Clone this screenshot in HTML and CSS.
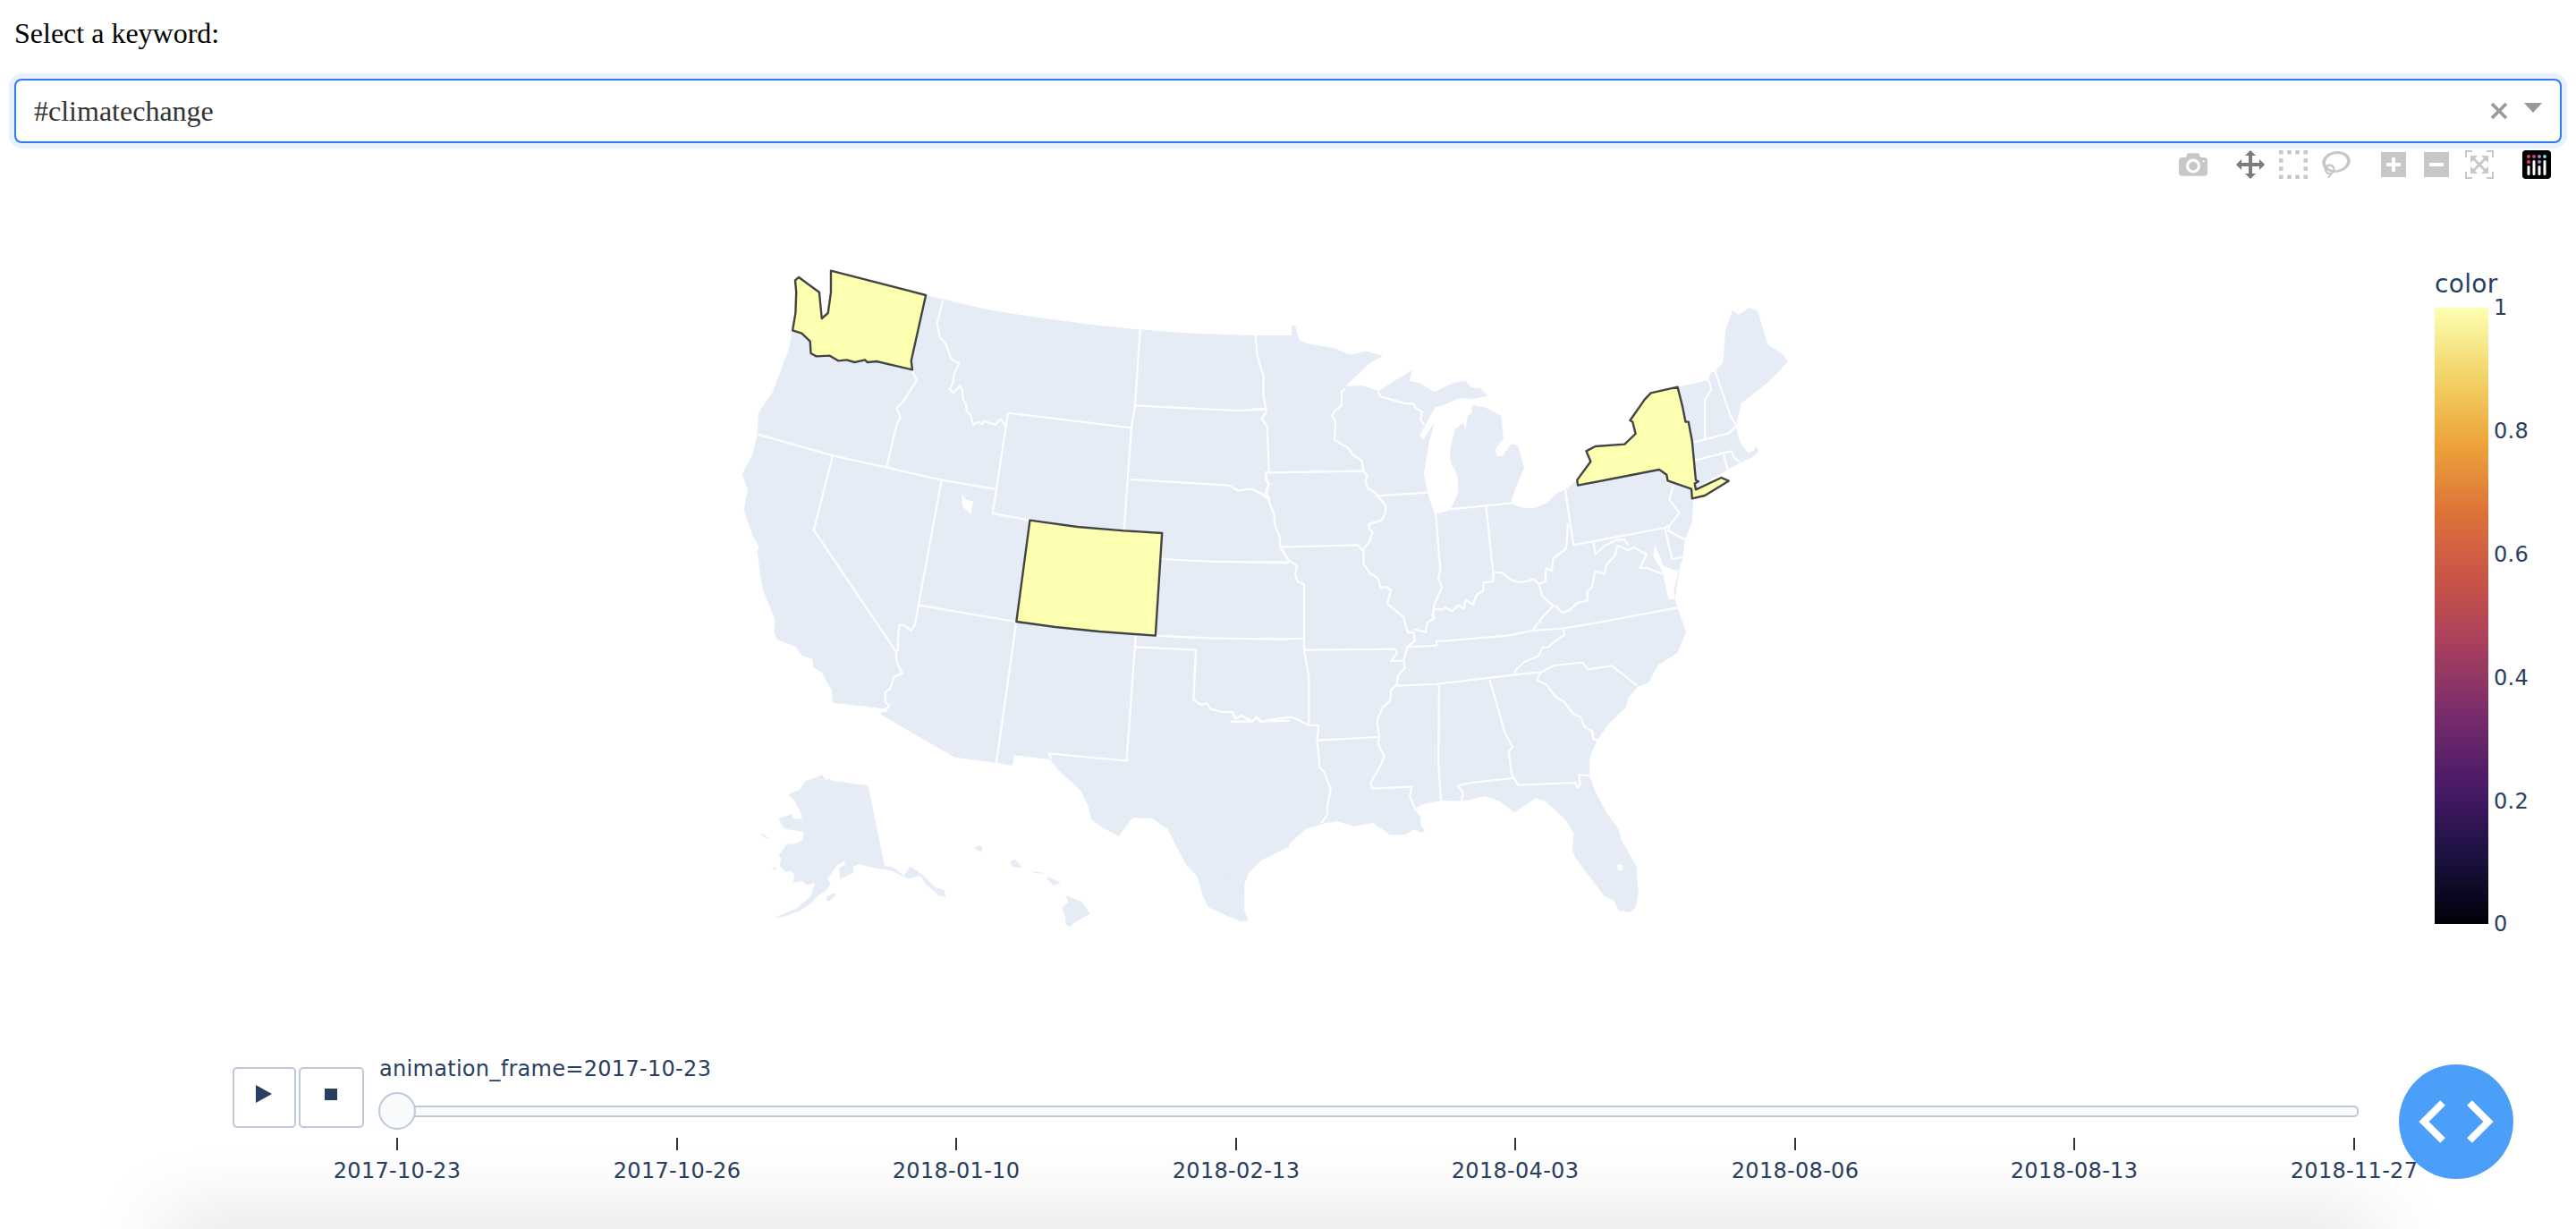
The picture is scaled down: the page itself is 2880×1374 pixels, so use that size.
FILE: index.html
```html
<!DOCTYPE html>
<html lang="en">
<head>
<meta charset="utf-8">
<title>Keyword map</title>
<link rel="stylesheet" href="styles.css">
</head>
<body>
<div class="page">
  <label class="field-label">Select a keyword:</label>
  <div class="select">
    <span class="select-value">#climatechange</span>
    <svg class="select-clear" viewBox="0 0 20 20"><path d="M2 2 18 18M18 2 2 18"/></svg>
    <svg class="select-arrow" viewBox="0 0 20 11"><path d="M0 0H20L10 11Z"/></svg>
  </div>
  <div class="modebar">
    <svg class="mb mb-w32 mb-gap32" viewBox="0 0 1000 1000"><path transform="matrix(1 0 0 -1 0 850)" d="m500 450c-83 0-150-67-150-150 0-83 67-150 150-150 83 0 150 67 150 150 0 83-67 150-150 150z m400 150h-120c-16 0-34 13-39 29l-31 93c-6 15-23 28-40 28h-340c-16 0-34-13-39-28l-31-94c-6-15-23-28-40-28h-120c-55 0-100-45-100-100v-450c0-55 45-100 100-100h800c55 0 100 45 100 100v450c0 55-45 100-100 100z m-400-550c-138 0-250 112-250 250 0 138 112 250 250 250 138 0 250-112 250-250 0-138-112-250-250-250z m365 380c-19 0-35 16-35 35 0 19 16 35 35 35 19 0 35-16 35-35 0-19-16-35-35-35z"/></svg>
    <svg class="mb mb-active mb-w32 mb-gap16" viewBox="0 0 1000 1000"><path transform="matrix(1 0 0 -1 0 850)" d="m1000 350l-187 188 0-125-250 0 0 250 125 0-188 187-187-187 125 0 0-250-250 0 0 125-188-188 186-187 0 125 252 0 0-250-125 0 187-188 188 188-125 0 0 250 250 0 0-126 187 188z"/></svg>
    <svg class="mb mb-w32 mb-gap16" viewBox="0 0 1000 1000"><path transform="matrix(1 0 0 -1 0 850)" d="m0 850l0-143 143 0 0 143-143 0z m286 0l0-143 143 0 0 143-143 0z m285 0l0-143 143 0 0 143-143 0z m286 0l0-143 143 0 0 143-143 0z m-857-286l0-143 143 0 0 143-143 0z m857 0l0-143 143 0 0 143-143 0z m-857-285l0-143 143 0 0 143-143 0z m857 0l0-143 143 0 0 143-143 0z m-857-286l0-143 143 0 0 143-143 0z m286 0l0-143 143 0 0 143-143 0z m285 0l0-143 143 0 0 143-143 0z m286 0l0-143 143 0 0 143-143 0z"/></svg>
    <svg class="mb mb-w32 mb-gap34" viewBox="0 0 1031 1000"><path transform="matrix(1 0 0 -1 0 850)" d="m1018 538c-36 207-290 336-568 286-277-48-473-256-436-463 10-57 36-108 76-151-13-66 11-137 68-183 34-28 75-41 114-42l-55-70 0 0c-2-1-3-2-4-3-10-14-8-34 5-45 14-11 34-8 45 4 1 1 2 3 2 5l0 0 113 140c16 11 31 24 45 40 4 3 6 7 8 11 48-3 100 0 151 9 278 48 473 255 436 462z m-624-379c-80 14-149 48-197 96 42 42 109 47 156 9 33-26 47-66 41-105z m-187-74c-19 16-33 37-39 60 50-32 109-55 174-68-42-25-95-24-135 8z m360 75c-34-7-69-9-102-8 8 62-16 128-68 170-73 59-175 54-244-5-9 20-16 40-20 61-28 159 121 317 333 354s407-60 434-217c28-159-121-318-333-355z"/></svg>
    <svg class="mb mb-w28 mb-gap20" viewBox="0 0 875 1000"><path transform="matrix(1 0 0 -1 0 850)" d="m1 787l0-875 875 0 0 875-875 0z m687-500l-187 0 0-187-125 0 0 187-188 0 0 125 188 0 0 187 125 0 0-187 187 0 0-125z"/></svg>
    <svg class="mb mb-w28 mb-gap18" viewBox="0 0 875 1000"><path transform="matrix(1 0 0 -1 0 850)" d="m0 788l0-876 875 0 0 876-875 0z m688-500l-500 0 0 125 500 0 0-125z"/></svg>
    <svg class="mb mb-w32 mb-gap32" viewBox="0 0 1000 1000"><path transform="matrix(1 0 0 -1 0 850)" d="m250 850l-187 0-63 0 0-62 0-188 63 0 0 188 187 0 0 62z m688 0l-188 0 0-62 188 0 0-188 62 0 0 188 0 62-62 0z m-875-938l0 188-63 0 0-188 0-62 63 0 187 0 0 62-187 0z m875 188l0-188-188 0 0-62 188 0 62 0 0 62 0 188-62 0z m-125 188l-1 0-93-94-156 156 156 156 92-93 2 0 0 250-250 0 0-2 93-92-156-156-156 156 94 92 0 2-250 0 0-250 0 0 93 93 157-156-157-156-93 94 0 0 0-250 250 0 0 0-94 93 156 157 156-157-93-93 0 0 250 0 0 250z"/></svg>
    <svg class="mb-logo" viewBox="0 0 32 32">
      <rect class="logo-bg" width="32" height="32" rx="4"/>
      <circle class="dot-a" cx="7" cy="7" r="2"/><circle class="dot-b" cx="13" cy="7" r="2"/><circle class="dot-c" cx="19" cy="7" r="2"/><circle class="dot-d" cx="25" cy="7" r="2"/>
      <circle class="dot-a" cx="7" cy="13" r="2"/><circle class="dot-c" cx="19" cy="13" r="2"/>
      <rect class="logo-bar" x="5.5" y="17" width="3" height="11" rx="1.5"/>
      <rect class="logo-bar" x="11.5" y="11" width="3" height="17" rx="1.5"/>
      <rect class="logo-bar" x="17.5" y="17" width="3" height="11" rx="1.5"/>
      <rect class="logo-bar" x="23.5" y="11" width="3" height="17" rx="1.500"/>
    </svg>
  </div>

  <svg class="chart" viewBox="0 200 2880 1174" role="img">
    <defs>
      <linearGradient id="inferno" x1="0" y1="1" x2="0" y2="0">
        <stop offset="0" stop-color="#000008"/>
        <stop offset="0.111" stop-color="#1c1141"/>
        <stop offset="0.222" stop-color="#481a68"/>
        <stop offset="0.333" stop-color="#752b6b"/>
        <stop offset="0.444" stop-color="#a43e5e"/>
        <stop offset="0.556" stop-color="#c85348"/>
        <stop offset="0.667" stop-color="#dd7239"/>
        <stop offset="0.778" stop-color="#eda33a"/>
        <stop offset="0.889" stop-color="#f2d468"/>
        <stop offset="1" stop-color="#fdffb2"/>
      </linearGradient>
    </defs>

    <!-- Land, west then east -->
    <g transform="translate(780 270) scale(.40816 .33333)">
      <polygon class="land" points="260,295 625,180 800,230 950,258 1100,282 1210,295 1350,308 1530,315 1620,315 1620,1500 365,1500 340,1445 317,1425 316,1402 285,1385 268,1355 218,1330 210,1310 212,1270 178,1165 163,1040 168,1022 150,985 127,900 137,830 122,780 150,715 163,650 166,575 205,505 250,360"/>
      <polygon class="water" points="723,845 735,865 755,872 748,915 725,888"/>
      <g transform="translate(0 1110)">
        <polygon class="land" points="170,0 180,60 213,160 210,205 218,225 268,248 285,278 316,290 316,318 340,335 367,392 370,437 510,457 527,445 500,475 590,540 705,620 815,638 862,647 867,613 965,627 990,665 1050,733 1070,785 1078,828 1108,855 1153,885 1193,822 1245,825 1288,862 1335,975 1370,1022 1382,1080 1398,1122 1450,1152 1488,1170 1508,1168 1497,1130 1498,1045 1510,1005 1548,962 1620,920 1620,0"/>
        <polygon class="land" points="340,678 352,697 360,692 372,700 395,702 435,710 467,715 512,985 535,988 565,1018 582,985 612,1010 650,1057 675,1065 680,1090 660,1083 625,1045 610,1018 575,1027 530,1000 490,993 440,978 425,988 428,1005 390,1030 388,990 405,980 400,968 380,985 355,1030 365,1045 350,1068 328,1085 315,1105 298,1120 280,1135 235,1155 210,1158 245,1140 270,1128 310,1085 322,1042 300,1048 285,1035 262,1040 265,1015 255,1000 240,1005 225,985 228,960 222,950 245,910 262,912 288,897 290,870 265,865 245,862 233,855 222,825 260,810 260,825 287,828 280,800 262,760 247,745 280,728 295,700 320,690"/>
        <polygon class="land" points="352,1088 370,1076 380,1080 360,1103 353,1100"/>
        <polygon class="land" points="203,987 217,990 212,998"/>
        <polygon class="land" points="172,876 182,880 195,892 186,892"/>
        <polygon class="land" points="757,925 770,915 780,920 778,938"/>
        <polygon class="land" points="855,970 870,962 888,990 862,988"/>
        <polygon class="land" points="920,1003 947,1007 945,1010 920,1008"/>
        <polygon class="land" points="958,1020 995,1040 975,1050 958,1030"/>
        <polygon class="land" points="1008,1082 1052,1105 1075,1145 1030,1175 1018,1188 1007,1180 1008,1160 998,1125 1015,1105"/>
      </g>
    </g>
    <g transform="translate(1400 320) scale(.40816 .33333)">
      <polygon class="land" points="0,165 108,165 108,132 118,132 128,180 150,192 225,208 270,230 310,218 358,233 320,260 255,335 303,333 345,352 440,280 430,318 460,325 498,355 550,325 585,317 600,340 625,342 645,368 605,378 568,375 530,395 500,407 475,465 458,500 468,515 500,455 485,520 470,630 482,700 500,765 530,755 545,745 565,690 562,635 542,585 542,550 555,480 578,458 585,480 590,435 600,425 604,398 640,407 682,435 688,510 665,548 670,570 685,570 710,528 728,535 745,610 725,665 708,725 720,735 750,745 770,745 805,728 835,695 860,680 890,650 1100,500 1165,338 1250,315 1255,290 1268,285 1290,255 1296,150 1315,82 1332,95 1362,72 1385,85 1412,195 1455,230 1467,252 1420,315 1340,392 1325,470 1335,520 1358,560 1375,550 1380,535 1387,555 1375,570 1340,590 1310,610 1210,680 1205,790 1185,850 1180,910 1170,950 1158,1050 1165,1078 1188,1160 1165,1230 1112,1270 1085,1330 1055,1345 1030,1380 1025,1410 975,1470 945,1522 925,1578 924,1640 940,1695 970,1765 1003,1820 1010,1855 1052,1945 1058,2035 1050,2085 1033,2100 1004,2094 990,2060 964,2045 888,1922 877,1895 881,1835 857,1788 803,1727 777,1717 718,1765 678,1727 638,1710 578,1727 520,1725 472,1735 450,1748 460,1775 462,1810 472,1825 465,1833 442,1822 418,1840 378,1840 330,1800 278,1812 232,1794 195,1802 145,1822 90,1885 28,1922 -60,1990 -60,165"/>
      <polygon class="water" points="1103,868 1098,905 1120,950 1125,965 1140,1050 1158,1050 1155,1020 1168,955 1150,950 1125,935 1115,900"/>
      <polygon class="water" points="1000,1940 1014,1940 1015,1960 1002,1960"/>
    </g>

    <!-- State borders, west then east -->
    <g transform="translate(780 270) scale(.40816 .33333)">
      <polyline class="border" points="672,196 656,275 663,320 680,345 695,395 717,408 702,445 700,470 690,495 700,507 718,485 725,500 727,530 735,545 737,570 747,580 755,615 768,605 780,612 785,602 815,615 830,595 845,620"/>
      <polyline class="border" points="1212,295 1198,550 1188,625 1168,965"/>
      <polyline class="border" points="1198,550 1350,560 1480,567 1558,563"/>
      <polyline class="border" points="850,575 1188,625"/>
      <polyline class="border" points="850,575 808,912 910,935"/>
      <polyline class="border" points="585,430 600,465 570,525 545,560 555,590 545,615 517,758"/>
      <polyline class="border" points="165,647 370,718 517,758 668,800 815,830"/>
      <polyline class="border" points="370,718 318,968 543,1375"/>
      <polyline class="border" points="668,800 605,1220 595,1285 585,1305 565,1287 553,1287 550,1310 548,1370 543,1375"/>
      <polyline class="border" points="605,1220 872,1275"/>
      <polyline class="border" points="1270,1065 1400,1073 1620,1078"/>
      <polyline class="border" points="1183,798 1455,818 1480,835 1520,830 1550,850 1568,865"/>
      <polyline class="border" points="1528,315 1533,385 1550,450 1550,520 1558,570 1545,595 1560,620 1565,770 1556,775 1558,800 1565,815 1552,850"/>
      <g transform="translate(0 1110)">
        <polyline class="border" points="543,262 545,300 560,338 538,350 527,390 514,402 514,435 525,447 515,465 505,465"/>
        <polyline class="border" points="873,165 818,640"/>
        <polyline class="border" points="1200,210 1175,632 962,607 968,625"/>
        <polyline class="border" points="1200,250 1365,260 1358,427 1380,445 1395,438 1405,458 1438,468 1465,468 1473,490 1490,480 1520,500 1530,485 1540,500 1620,497"/>
        <polyline class="border" points="1255,212 1400,220 1620,225"/>
      </g>
    </g>
    <g transform="translate(1400 320) scale(.40816 .33333)">
      <polyline class="border" points="0,412 40,412"/>
      <polyline class="border" points="38,625 305,620"/>
      <polyline class="border" points="38,625 38,650 45,660 40,695 50,735 60,765 62,800 75,840 77,875 100,920 122,937 118,970 125,990 142,1000 142,1220"/>
      <polyline class="border" points="0,680 30,700 38,712"/>
      <polyline class="border" points="77,875 290,868 303,888"/>
      <polyline class="border" points="0,925 100,925"/>
      <polyline class="border" points="0,1182 142,1182"/>
      <polyline class="border" points="142,1220 390,1217 397,1230 380,1258 415,1255"/>
      <polyline class="border" points="255,345 245,352 245,400 225,420 218,435 228,455 225,515 245,530 265,545 275,565 300,585 305,620 315,635 310,655 318,680 335,690 345,705"/>
      <polyline class="border" points="345,355 352,370 418,393 442,395 448,410 465,420 462,450 472,465"/>
      <polyline class="border" points="340,703 480,692"/>
      <polyline class="border" points="345,705 365,735 365,760 355,785 320,797 320,812 330,825 320,860 305,880 305,930 320,960 345,980 352,1012 367,1008 380,1020 370,1065 395,1090 415,1110 420,1140 428,1163 443,1160"/>
      <polyline class="border" points="503,765 515,950 510,980 520,1010 498,1070 495,1110"/>
      <polyline class="border" points="640,735 660,960"/>
      <polyline class="border" points="540,748 710,728"/>
      <polyline class="border" points="498,1082 520,1085 528,1078 548,1090 565,1070 580,1080 585,1052 605,1068 615,1035 633,1020 633,995 660,990 660,960 682,960 710,985 730,993 750,990 770,982 785,998 803,990 805,945 820,955 825,912 860,880 865,800 860,795"/>
      <polyline class="border" points="857,680 880,868 1130,810"/>
      <polyline class="border" points="1153,670 1143,715 1170,760 1145,800 1130,810"/>
      <polyline class="border" points="1143,800 1140,820 1185,850"/>
      <polyline class="border" points="1130,810 1150,915 1180,908"/>
      <polyline class="border" points="935,860 940,900 965,870 1000,850 1020,850 1030,870"/>
      <polyline class="border" points="1000,870 1030,885 1045,875 1080,900 1062,945 1080,945 1125,965"/>
      <polyline class="border" points="1000,870 995,900 970,935 965,965 940,955 930,1010 918,1025 918,1055 890,1062 870,1085 850,1095 830,1072"/>
      <polyline class="border" points="785,1000 795,1040 825,1072 795,1110 768,1155"/>
      <polyline class="border" points="425,1210 505,1205 505,1190 525,1190 700,1172 768,1155 850,1148 960,1125 1165,1078"/>
      <polyline class="border" points="853,1150 855,1170 830,1190 810,1212 795,1210 785,1240 745,1260 720,1290 720,1305"/>
      <polyline class="border" points="392,1340 500,1335 720,1303 795,1293"/>
      <polyline class="border" points="795,1293 825,1272 905,1262 920,1285 985,1273 1055,1340"/>
      <polyline class="border" points="790,1295 780,1322 805,1335 830,1375 855,1395 880,1435 900,1445 910,1478 930,1490 935,1518 945,1522"/>
      <polyline class="border" points="650,1320 693,1500 713,1545 703,1560 710,1635 728,1673 885,1665 892,1682 898,1670 895,1638 925,1642"/>
      <polyline class="border" points="715,1650 600,1665 563,1675 578,1700 573,1727"/>
      <polyline class="border" points="508,1335 512,1345 510,1600 517,1725"/>
      <polyline class="border" points="393,1340 380,1355 378,1390 358,1412 342,1455 348,1510 345,1535 362,1578 350,1610 325,1665 328,1685 437,1678 432,1710 445,1750 460,1775"/>
      <polyline class="border" points="415,1255 418,1280 400,1305 395,1340"/>
      <polyline class="border" points="443,1160 445,1190 425,1210 415,1255"/>
      <polyline class="border" points="443,1150 475,1160 480,1128 500,1112 492,1105 498,1085"/>
      <polyline class="border" points="142,1220 155,1310 155,1472"/>
      <polyline class="border" points="-60,1460 0,1460 12,1445 25,1460 70,1450 110,1445 155,1472 182,1473 178,1525 185,1615 195,1625 215,1685 205,1750 207,1770 190,1800"/>
      <polyline class="border" points="178,1523 345,1512"/>
      <polyline class="border" points="1250,315 1258,345 1240,380 1240,510"/>
      <polyline class="border" points="1268,285 1310,435 1325,465"/>
      <polyline class="border" points="1210,523 1305,493 1325,470"/>
      <polyline class="border" points="1210,585 1312,553 1320,575 1335,590"/>
      <polyline class="border" points="1292,565 1302,617"/>
      <polygon class="state-on" points="1165,338 1092,358 1075,380 1035,450 1042,455 1050,495 1020,530 940,537 915,553 927,588 890,650 892,668 1115,615 1135,632 1138,652 1203,680 1205,712 1240,702 1305,653 1285,642 1215,682 1212,662 1222,655 1215,650 1205,520 1195,455 1187,455 1178,400"/>
    </g>
    <g transform="translate(780 270) scale(.40816 .33333)">
      <polygon class="state-on" points="365,98 625,180 585,400 588,430 490,402 465,405 458,397 430,405 408,397 385,400 362,383 325,385 310,375 308,335 285,308 260,298 268,240 270,170 267,130 277,120 333,170 340,258 357,240 365,170"/>
      <polygon class="state-on" points="910,935 1040,957 1168,970 1272,978 1254,1322 1100,1308 980,1293 873,1275"/>
    </g>

    <!-- Colour bar -->
    <text class="axis-title" x="2722" y="327">color</text>
    <rect x="2722" y="344" width="60" height="689" fill="url(#inferno)"/>
    <text class="axis-text" x="2788" y="352">1</text>
    <text class="axis-text" x="2788" y="490">0.8</text>
    <text class="axis-text" x="2788" y="628">0.6</text>
    <text class="axis-text" x="2788" y="766">0.4</text>
    <text class="axis-text" x="2788" y="904">0.2</text>
    <text class="axis-text" x="2788" y="1041">0</text>

    <!-- Animation controls -->
    <rect class="ctl" x="261" y="1194" width="69" height="66" rx="4"/>
    <rect class="ctl" x="335" y="1194" width="71" height="66" rx="4"/>
    <polygon class="ctl-glyph" points="286,1213 304,1223 286,1233"/>
    <rect class="ctl-glyph" x="363" y="1217" width="14" height="13"/>
    <text class="axis-text" x="424" y="1203">animation_frame=2017-10-23</text>
    <rect class="track" x="446" y="1237" width="2190" height="11" rx="4"/>
    <ellipse class="knob" cx="444" cy="1242" rx="20" ry="20"/>
    <g class="ticks">
      <line x1="444" x2="444" y1="1272" y2="1286"/>
      <line x1="757" x2="757" y1="1272" y2="1286"/>
      <line x1="1069" x2="1069" y1="1272" y2="1286"/>
      <line x1="1382" x2="1382" y1="1272" y2="1286"/>
      <line x1="1694" x2="1694" y1="1272" y2="1286"/>
      <line x1="2007" x2="2007" y1="1272" y2="1286"/>
      <line x1="2319" x2="2319" y1="1272" y2="1286"/>
      <line x1="2632" x2="2632" y1="1272" y2="1286"/>
    </g>
    <g class="tick-labels">
      <text x="444" y="1317">2017-10-23</text>
      <text x="757" y="1317">2017-10-26</text>
      <text x="1069" y="1317">2018-01-10</text>
      <text x="1382" y="1317">2018-02-13</text>
      <text x="1694" y="1317">2018-04-03</text>
      <text x="2007" y="1317">2018-08-06</text>
      <text x="2319" y="1317">2018-08-13</text>
      <text x="2632" y="1317">2018-11-27</text>
    </g>
  </svg>

  <div class="bottom-shade"></div>
  <button class="fab" type="button" aria-label="Toggle code">
    <svg class="fab-icon" viewBox="0 0 128 128"><path d="M49 43 28 64 49 85M79 43 100 64 79 85"/></svg>
  </button>
</div>
</body>
</html>
```

FILE: styles.css
```css
* { box-sizing: border-box; }

html, body {
  margin: 0;
  padding: 0;
  background: #fff;
}

.page {
  position: relative;
  width: 2880px;
  height: 1374px;
  overflow: hidden;
  font-family: "Liberation Serif", "Times New Roman", serif;
}

.field-label {
  display: block;
  height: 88px;
  padding: 19px 0 0 16px;
  font-size: 32px;
  line-height: 37px;
  color: #000;
}

.select {
  display: flex;
  align-items: center;
  height: 72px;
  margin: 0 16px;
  padding: 0 20px;
  background: #fff;
  border: 2px solid #2f7bf0;
  border-radius: 8px;
  box-shadow: 0 0 0 6px #e9f1fe;
}

.select-value {
  flex: 1;
  font-size: 32px;
  line-height: 36px;
  color: #333;
}

.select-clear {
  width: 20px;
  height: 20px;
  margin-right: 18px;
  fill: none;
  stroke: #999;
  stroke-width: 3.6;
}

.select-arrow {
  width: 20px;
  height: 11px;
  margin-top: -7px;
  fill: #999;
}

.modebar {
  display: flex;
  justify-content: flex-end;
  height: 32px;
  margin-top: 8px;
  padding-right: 28px;
}

.mb {
  height: 32px;
  flex: none;
  fill: #c7c7c7;
}

.mb-active { fill: #7c7c7c; }
.mb-w32 { width: 32px; }
.mb-w28 { width: 28px; }
.mb-gap16 { margin-right: 16px; }
.mb-gap18 { margin-right: 18px; }
.mb-gap20 { margin-right: 20px; }
.mb-gap32 { margin-right: 32px; }
.mb-gap34 { margin-right: 34px; }

.mb-logo {
  width: 32px;
  height: 32px;
  flex: none;
}

.logo-bg { fill: #000; }
.logo-bar { fill: #fff; }
.dot-a { fill: #ef3f6f; }
.dot-b { fill: #c6437f; }
.dot-c { fill: #a78bc8; }
.dot-d { fill: #7fd6ee; }

.chart {
  display: block;
  width: 2880px;
  height: 1174px;
}

.land {
  fill: #e5ecf6;
  stroke: none;
}

.water {
  fill: #fff;
  stroke: none;
}

.border {
  fill: none;
  stroke: #fff;
  stroke-width: 2.2px;
  stroke-linejoin: round;
  vector-effect: non-scaling-stroke;
}

.state-on {
  fill: #fdffb0;
  stroke: #444;
  stroke-width: 2.4px;
  stroke-linejoin: round;
  vector-effect: non-scaling-stroke;
}

.axis-text,
.axis-title,
.tick-labels text {
  font-family: "DejaVu Sans", Verdana, sans-serif;
  font-size: 24px;
  letter-spacing: 0.3px;
  fill: #2a3f5f;
}

.axis-title { font-size: 28px; }

.tick-labels text { text-anchor: middle; }

.ctl {
  fill: #fff;
  stroke: #bec8d9;
  stroke-width: 2;
}

.ctl-glyph { fill: #2a3f5f; }

.track {
  fill: #f8fafc;
  stroke: #bec8d9;
  stroke-width: 2;
}

.knob {
  fill: #f8fafc;
  stroke: #bec8d9;
  stroke-width: 2;
}

.ticks line {
  stroke: #333;
  stroke-width: 2;
}

.bottom-shade {
  position: absolute;
  left: 190px;
  right: 230px;
  bottom: -40px;
  height: 40px;
  box-shadow: 0 0 90px 6px rgba(0, 0, 0, 0.16);
  pointer-events: none;
}

.fab {
  position: absolute;
  left: 2682px;
  top: 1190px;
  width: 128px;
  height: 128px;
  padding: 0;
  border: 0;
  border-radius: 50%;
  background: #4b9ff8;
}

.fab-icon {
  display: block;
  width: 128px;
  height: 128px;
  fill: none;
  stroke: #fff;
  stroke-width: 8;
}
```
